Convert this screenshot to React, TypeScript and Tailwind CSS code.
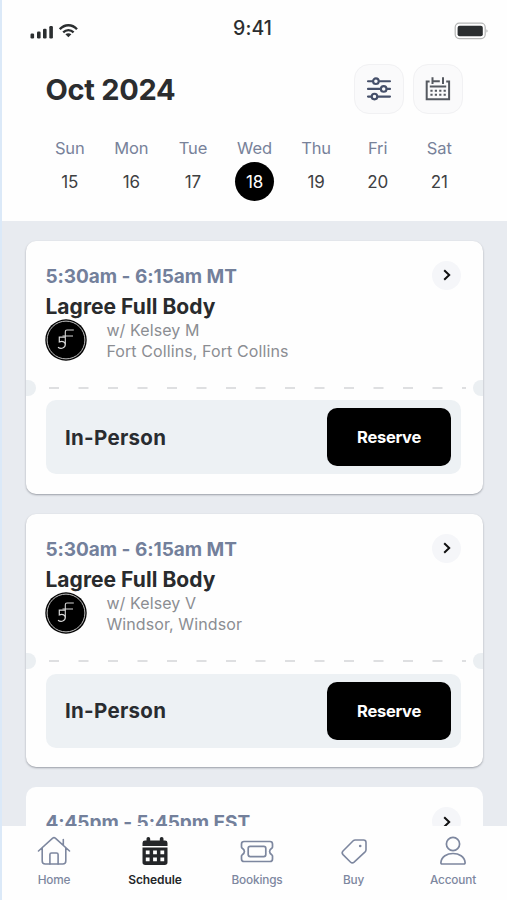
import type { ReactNode } from "react";

const days = [
  { name: "Sun", date: 15 },
  { name: "Mon", date: 16 },
  { name: "Tue", date: 17 },
  { name: "Wed", date: 18, selected: true },
  { name: "Thu", date: 19 },
  { name: "Fri", date: 20 },
  { name: "Sat", date: 21 },
];

const classes = [
  { time: "5:30am - 6:15am MT", title: "Lagree Full Body", coach: "w/ Kelsey M", place: "Fort Collins, Fort Collins" },
  { time: "5:30am - 6:15am MT", title: "Lagree Full Body", coach: "w/ Kelsey V", place: "Windsor, Windsor" },
];

const StatusBar = () => (
  <div className="flex h-[62px] justify-between pl-[28px] pr-[18px] pt-[17px] text-[#2b2e30]">
    <div className="flex w-[76px] gap-[5px] pt-[6px]">
      <svg width="24" height="16" viewBox="0 0 24 16" fill="currentColor">
        <rect x="0.5" y="10.5" width="3.6" height="5" rx="1.2" />
        <rect x="7" y="8.5" width="3.6" height="7" rx="1.2" />
        <rect x="13" y="5.7" width="3.6" height="9.8" rx="1.2" />
        <rect x="19.3" y="3" width="3.6" height="12.5" rx="1.2" />
      </svg>
      <svg width="20" height="16" viewBox="0 0 20 16" fill="none" stroke="currentColor" strokeWidth="2.3">
        <path d="M0.8 6.2C5.7 0.9 13.1 0.9 18 6.2" />
        <path d="M4.2 9.4C7.2 6.4 11.6 6.4 14.6 9.4" />
        <path d="M6.4 11.2C8.2 9.9 10.6 9.9 12.4 11.2L9.4 14.3Z" fill="currentColor" stroke="none" />
      </svg>
    </div>
    <div className="text-[19.5px] font-medium leading-[22px] tracking-[0.1px]">9:41</div>
    <div className="flex w-[90px] justify-end pt-[5px]">
      <svg width="35" height="18" viewBox="0 0 35 18" fill="none">
        <rect x="1.2" y="1.2" width="30" height="15.4" rx="4" stroke="#b5b6b6" strokeWidth="1.2" />
        <rect x="3.6" y="3.8" width="25.2" height="10.4" rx="2" fill="currentColor" />
        <path d="M32.4 7.2C34 7.8 34 10 32.4 10.6Z" fill="#b5b6b6" />
      </svg>
    </div>
  </div>
);

const SlidersIcon = () => (
  <svg width="26" height="26" viewBox="0 0 26 26" fill="none" stroke="#46506a" strokeWidth="2.1" strokeLinecap="round">
    <path d="M2 5.2H6.8M13 5.2H24M2 12.9H14.6M20.8 12.9H24M2 20.6H5.4M11.6 20.6H24" />
    <circle cx="9.9" cy="5.2" r="2.8" />
    <circle cx="17.7" cy="12.9" r="2.8" />
    <circle cx="8.5" cy="20.6" r="2.8" />
  </svg>
);

const CalendarIcon = () => (
  <svg width="26" height="26" viewBox="0 0 26 26" fill="none" stroke="#555960" strokeWidth="2">
    <path d="M4.6 5.4H1.7V23.2H24.1V5.4H21.2" />
    <path d="M7.5 1.2V8M18 1.2V8M8.5 5.2H14.8M4.8 10.6H21.2" />
    <path d="M5.4 14.8H21M5.4 18.8H21" strokeDasharray="2.2 2.2" />
  </svg>
);

const IconButton = ({ children }: { children: ReactNode }) => (
  <button className="flex size-[50px] items-center justify-center rounded-[15px] border border-[#f1f1f3] bg-[#fafafb]">
    {children}
  </button>
);

const Header = () => (
  <header className="h-[221px] shrink-0 bg-[#fefefe]">
    <StatusBar />
    <div className="flex items-start justify-between pl-[43.5px] pr-[44px] pt-[2px]">
      <h1 className="pt-px text-[29px] font-bold leading-[50px] tracking-[-0.3px] text-[#2b2d2f]">Oct 2024</h1>
      <div className="flex gap-[9px]">
        <IconButton>
          <SlidersIcon />
        </IconButton>
        <IconButton>
          <CalendarIcon />
        </IconButton>
      </div>
    </div>
    <div className="ml-[37px] grid w-[431px] grid-cols-7 pt-[21px]">
      {days.map((day) => (
        <div key={day.name} className="flex flex-col items-center">
          <span className="text-[16.5px] leading-6 tracking-[-0.1px] text-[#78829a]">{day.name}</span>
          <span
            className={
              day.selected
                ? "mt-[2px] flex size-[39px] items-center justify-center rounded-full bg-black pt-[2px] text-[17px] tracking-[-0.2px] text-white"
                : "mt-[2px] flex size-[39px] items-center justify-center pt-[2px] text-[17px] tracking-[-0.2px] text-[#3e4042]"
            }
          >
            {day.date}
          </span>
        </div>
      ))}
    </div>
  </header>
);

const StudioLogo = () => (
  <svg width="42" height="42" viewBox="0 0 42 42" fill="none">
    <circle cx="21" cy="21" r="20.7" fill="#000" />
    <circle cx="21" cy="21" r="18.9" stroke="#c4c4c4" strokeWidth="1" />
    <path d="M28.8 11H22Q20.3 11 20.3 12.7V25.5M17.5 17H28" stroke="#d8d8d8" strokeWidth="1.1" />
    <path d="M20 18.2H14.3V23C18 21.6 20.3 23.2 20.3 25.6C20.3 29 16 30.4 13 28.2" stroke="#d8d8d8" strokeWidth="1.2" />
  </svg>
);

const CardHeading = ({ time }: { time: string }) => (
  <div className="flex justify-between">
    <p className="whitespace-nowrap text-[19px] font-bold leading-[31px] tracking-[-0.03px] text-[#73809b]">{time}</p>
    <button className="flex size-[29px] items-center justify-center rounded-full bg-[#f5f6f9]">
      <svg width="10" height="14" viewBox="0 0 10 14" fill="none" stroke="#111" strokeWidth="2">
        <path d="M2.2 2.2L7.2 7L2.2 11.8" />
      </svg>
    </button>
  </div>
);

const ClassCard = ({ time, title, coach, place }: (typeof classes)[number]) => (
  <article className="h-[253.5px] shrink-0 overflow-hidden rounded-[10px] bg-[#fefefe] shadow-[0_1px_2px_rgba(60,65,75,0.45)]">
    <div className="h-[136px] pl-[19.4px] pr-[22px] pt-[20px]">
      <CardHeading time={time} />
      <h2 className="text-[21px] font-bold leading-[30px] tracking-[0.05px] text-[#292b2d]">{title}</h2>
      <div className="-mt-[2.5px] flex">
        <StudioLogo />
        <div className="ml-[19px] pt-[1px] text-[16px] leading-[20.5px] tracking-[0.1px] text-[#8b8d92]">
          <p>{coach}</p>
          <p>{place}</p>
        </div>
      </div>
    </div>
    {/* perforated ticket edge */}
    <div className="flex h-[23px] items-center">
      <span className="h-4 w-[10px] rounded-r-full bg-[#ebeff2]" />
      <svg className="ml-[13px]" width="417" height="2" viewBox="0 0 417 2">
        <line x1="0" y1="1" x2="417" y2="1" stroke="#dedfe1" strokeWidth="2" strokeDasharray="10 19.5" />
      </svg>
      <span className="ml-auto h-4 w-[10px] rounded-l-full bg-[#ebeff2]" />
    </div>
    <div className="ml-[20px] mr-[22px] mt-[0.8px] flex h-[74px] items-center justify-between rounded-[10px] bg-[#edf1f4] pl-[19px] pr-[10px]">
      <span className="pt-[2px] text-[20.5px] font-bold tracking-[0.3px] text-[#292c30]">In-Person</span>
      <button className="h-[58px] w-[124px] rounded-[10px] bg-black pt-px text-[16.5px] font-bold tracking-[-0.3px] text-white">
        Reserve
      </button>
    </div>
  </article>
);

const HomeIcon = () => (
  <svg width="34" height="30" viewBox="0 0 34 30" fill="none" stroke="currentColor" strokeWidth="1.6" strokeLinecap="round" strokeLinejoin="round">
    <path d="M1.5 15L15.7 2.1Q17 1 18.3 2.1L32.5 15M5.2 12V25Q5.2 28 8.2 28H25.8Q28.8 28 28.8 25V12M26.3 9V3.5" />
    <path d="M12.9 28V18.6Q12.9 17 14.5 17H19.5Q21.1 17 21.1 18.6V28" />
  </svg>
);

const ScheduleIcon = () => (
  <svg width="26" height="30" viewBox="0 0 26 30" fill="currentColor">
    <path d="M6.3 1C7.5 1 8.2 1.8 8.2 2.9V4.6H17.8V2.9C17.8 1.8 18.5 1 19.7 1S21.5 1.8 21.5 2.9V4.6H23Q25.5 4.6 25.5 7V10H0.5V7Q0.5 4.6 3 4.6H4.5V2.9C4.5 1.8 5.1 1 6.3 1Z" />
    <path
      fillRule="evenodd"
      d="M0.5 11.4H25.5V26.3Q25.5 29 22.8 29H3.2Q0.5 29 0.5 26.3ZM3.8 14.6V18.2H7.6V14.6ZM11.1 14.6V18.2H14.9V14.6ZM18.4 14.6V18.2H22.2V14.6ZM3.8 21.6V25.2H7.6V21.6ZM11.1 21.6V25.2H14.9V21.6ZM18.4 21.6V25.2H22.2V21.6Z"
    />
  </svg>
);

const BookingsIcon = () => (
  <svg width="34" height="30" viewBox="0 0 34 30" fill="none" stroke="currentColor" strokeWidth="1.7" strokeLinejoin="round">
    <path d="M4 5.5H30Q32.5 5.5 32.5 8V11Q32.5 11.8 31.7 12.3C28.9 14.2 28.9 16.8 31.7 18.7Q32.5 19.2 32.5 20V23Q32.5 25.5 30 25.5H4Q1.5 25.5 1.5 23V20Q1.5 19.2 2.3 18.7C5.1 16.8 5.1 14.2 2.3 12.3Q1.5 11.8 1.5 11V8Q1.5 5.5 4 5.5Z" />
    <rect x="8.2" y="10.4" width="17.6" height="10.2" rx="2" />
  </svg>
);

const TagIcon = () => (
  <svg width="28" height="30" viewBox="0 0 28 30" fill="none" stroke="currentColor" strokeWidth="1.6" strokeLinejoin="round">
    <path d="M15.2 4H23.6Q26 4 26 6.4V13.8Q26 15 25.1 15.9L14.1 26.2Q12.2 27.8 10.4 26L3 18.6Q1.3 16.8 3 15L13.2 4.8Q14 4 15.2 4Z" />
    <circle cx="20.2" cy="10" r="1.3" fill="currentColor" stroke="none" />
  </svg>
);

const AccountIcon = () => (
  <svg width="28" height="30" viewBox="0 0 28 30" fill="none" stroke="currentColor" strokeWidth="1.7" strokeLinejoin="round">
    <circle cx="14" cy="8" r="6.6" />
    <path d="M3.2 28Q1.8 28 1.9 26.5C2.8 14.5 25.2 14.5 26.1 26.5Q26.2 28 24.8 28Z" />
  </svg>
);

const tabs = [
  { label: "Home", icon: <HomeIcon /> },
  { label: "Schedule", icon: <ScheduleIcon />, active: true },
  { label: "Bookings", icon: <BookingsIcon /> },
  { label: "Buy", icon: <TagIcon /> },
  { label: "Account", icon: <AccountIcon /> },
];

const TabBar = () => (
  <nav className="grid h-[74px] shrink-0 grid-cols-[104px_98px_106px_87px_112px] bg-[#fefefe] pt-[10px]">
    {tabs.map((tab) => (
      <a
        key={tab.label}
        className={
          tab.active
            ? "flex flex-col items-center text-[12px] font-semibold tracking-[-0.1px] text-[#242629]"
            : "flex flex-col items-center text-[11.8px] font-medium tracking-[-0.15px] text-[#7d879f]"
        }
      >
        {tab.icon}
        <span className="mt-[6px] leading-4">{tab.label}</span>
      </a>
    ))}
  </nav>
);

export default function App() {
  return (
    <div className="flex h-[900px] w-[507px] flex-col overflow-hidden border-l-2 border-[#dbe9f8] bg-[#e8ebf0] font-['Inter','Liberation_Sans',sans-serif]">
      <Header />
      <main className="flex min-h-0 flex-1 flex-col gap-[19.8px] overflow-hidden px-[24px] pt-[19.5px]">
        {classes.map((item, i) => (
          <ClassCard key={i} {...item} />
        ))}
        {/* next class, peeking out above the tab bar */}
        <article className="flex-1 rounded-t-[10px] bg-[#fefefe] pl-[19.4px] pr-[22px] pt-[20px]">
          <CardHeading time="4:45pm - 5:45pm EST" />
        </article>
      </main>
      <TabBar />
    </div>
  );
}
